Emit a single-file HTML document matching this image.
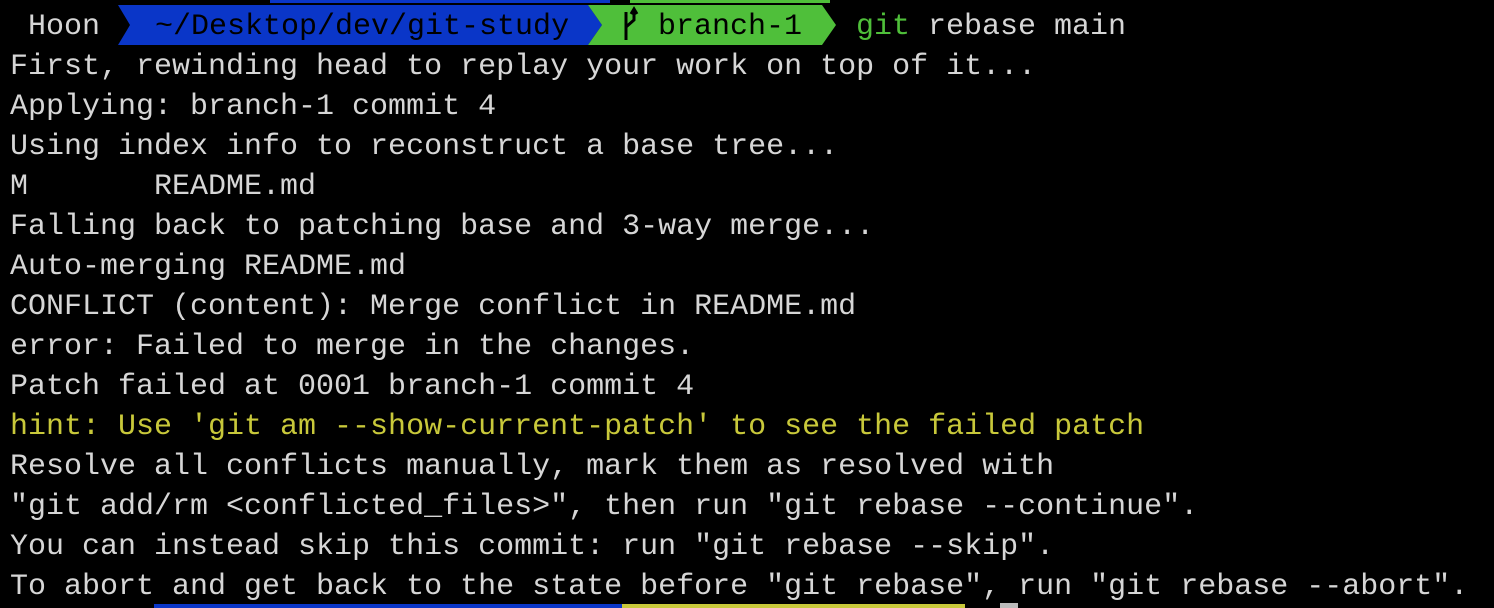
<!DOCTYPE html>
<html><head><meta charset="utf-8"><style>
html,body{margin:0;padding:0;background:#000;width:1494px;height:608px;overflow:hidden}
.t{position:absolute;left:10px;font-family:"Liberation Mono","DejaVu Sans Mono",monospace;font-size:30px;line-height:40px;color:#d6d6d6;white-space:pre;margin:0}
.y{color:#c8c83a}
</style></head><body>
<svg width="1494" height="608" style="position:absolute;left:0;top:0">
<rect x="270" y="0" width="340" height="3" fill="#0a36c8"/>
<rect x="630" y="0" width="200" height="3" fill="#4fbf3a"/>
<polygon points="118,5 588,5 602,25 588,45 118,45 130,25" fill="#0a36c8"/>
<polygon points="588,5 822,5 836,25 822,45 588,45 602,25" fill="#4fbf3a"/>
<rect x="154" y="604" width="468" height="4" fill="#0a36c8"/>
<rect x="622" y="604" width="343" height="4" fill="#c8c83a"/>
<rect x="1000" y="603" width="18" height="5" fill="#bbb"/>
<path d="M626 12 L626 40 M626 27 L634 20 L634 10 M631 14 L634 9 L637 14" stroke="#000" stroke-width="3" fill="none"/>
</svg>
<div class="t" style="top:7px;left:28px">Hoon</div>
<div class="t" style="top:7px;left:155px;color:#000">~/Desktop/dev/git-study</div>
<div class="t" style="top:7px;left:658px;color:#000">branch-1</div>
<div class="t" style="top:7px;left:856px"><span style="color:#4fbf3a">git</span> rebase main</div>
<pre class="t" style="top:47px">First, rewinding head to replay your work on top of it...
Applying: branch-1 commit 4
Using index info to reconstruct a base tree...
M       README.md
Falling back to patching base and 3-way merge...
Auto-merging README.md
CONFLICT (content): Merge conflict in README.md
error: Failed to merge in the changes.
Patch failed at 0001 branch-1 commit 4
<span class="y">hint: Use 'git am --show-current-patch' to see the failed patch</span>
Resolve all conflicts manually, mark them as resolved with
"git add/rm &lt;conflicted_files&gt;", then run "git rebase --continue".
You can instead skip this commit: run "git rebase --skip".
To abort and get back to the state before "git rebase", run "git rebase --abort".</pre>
</body></html>
